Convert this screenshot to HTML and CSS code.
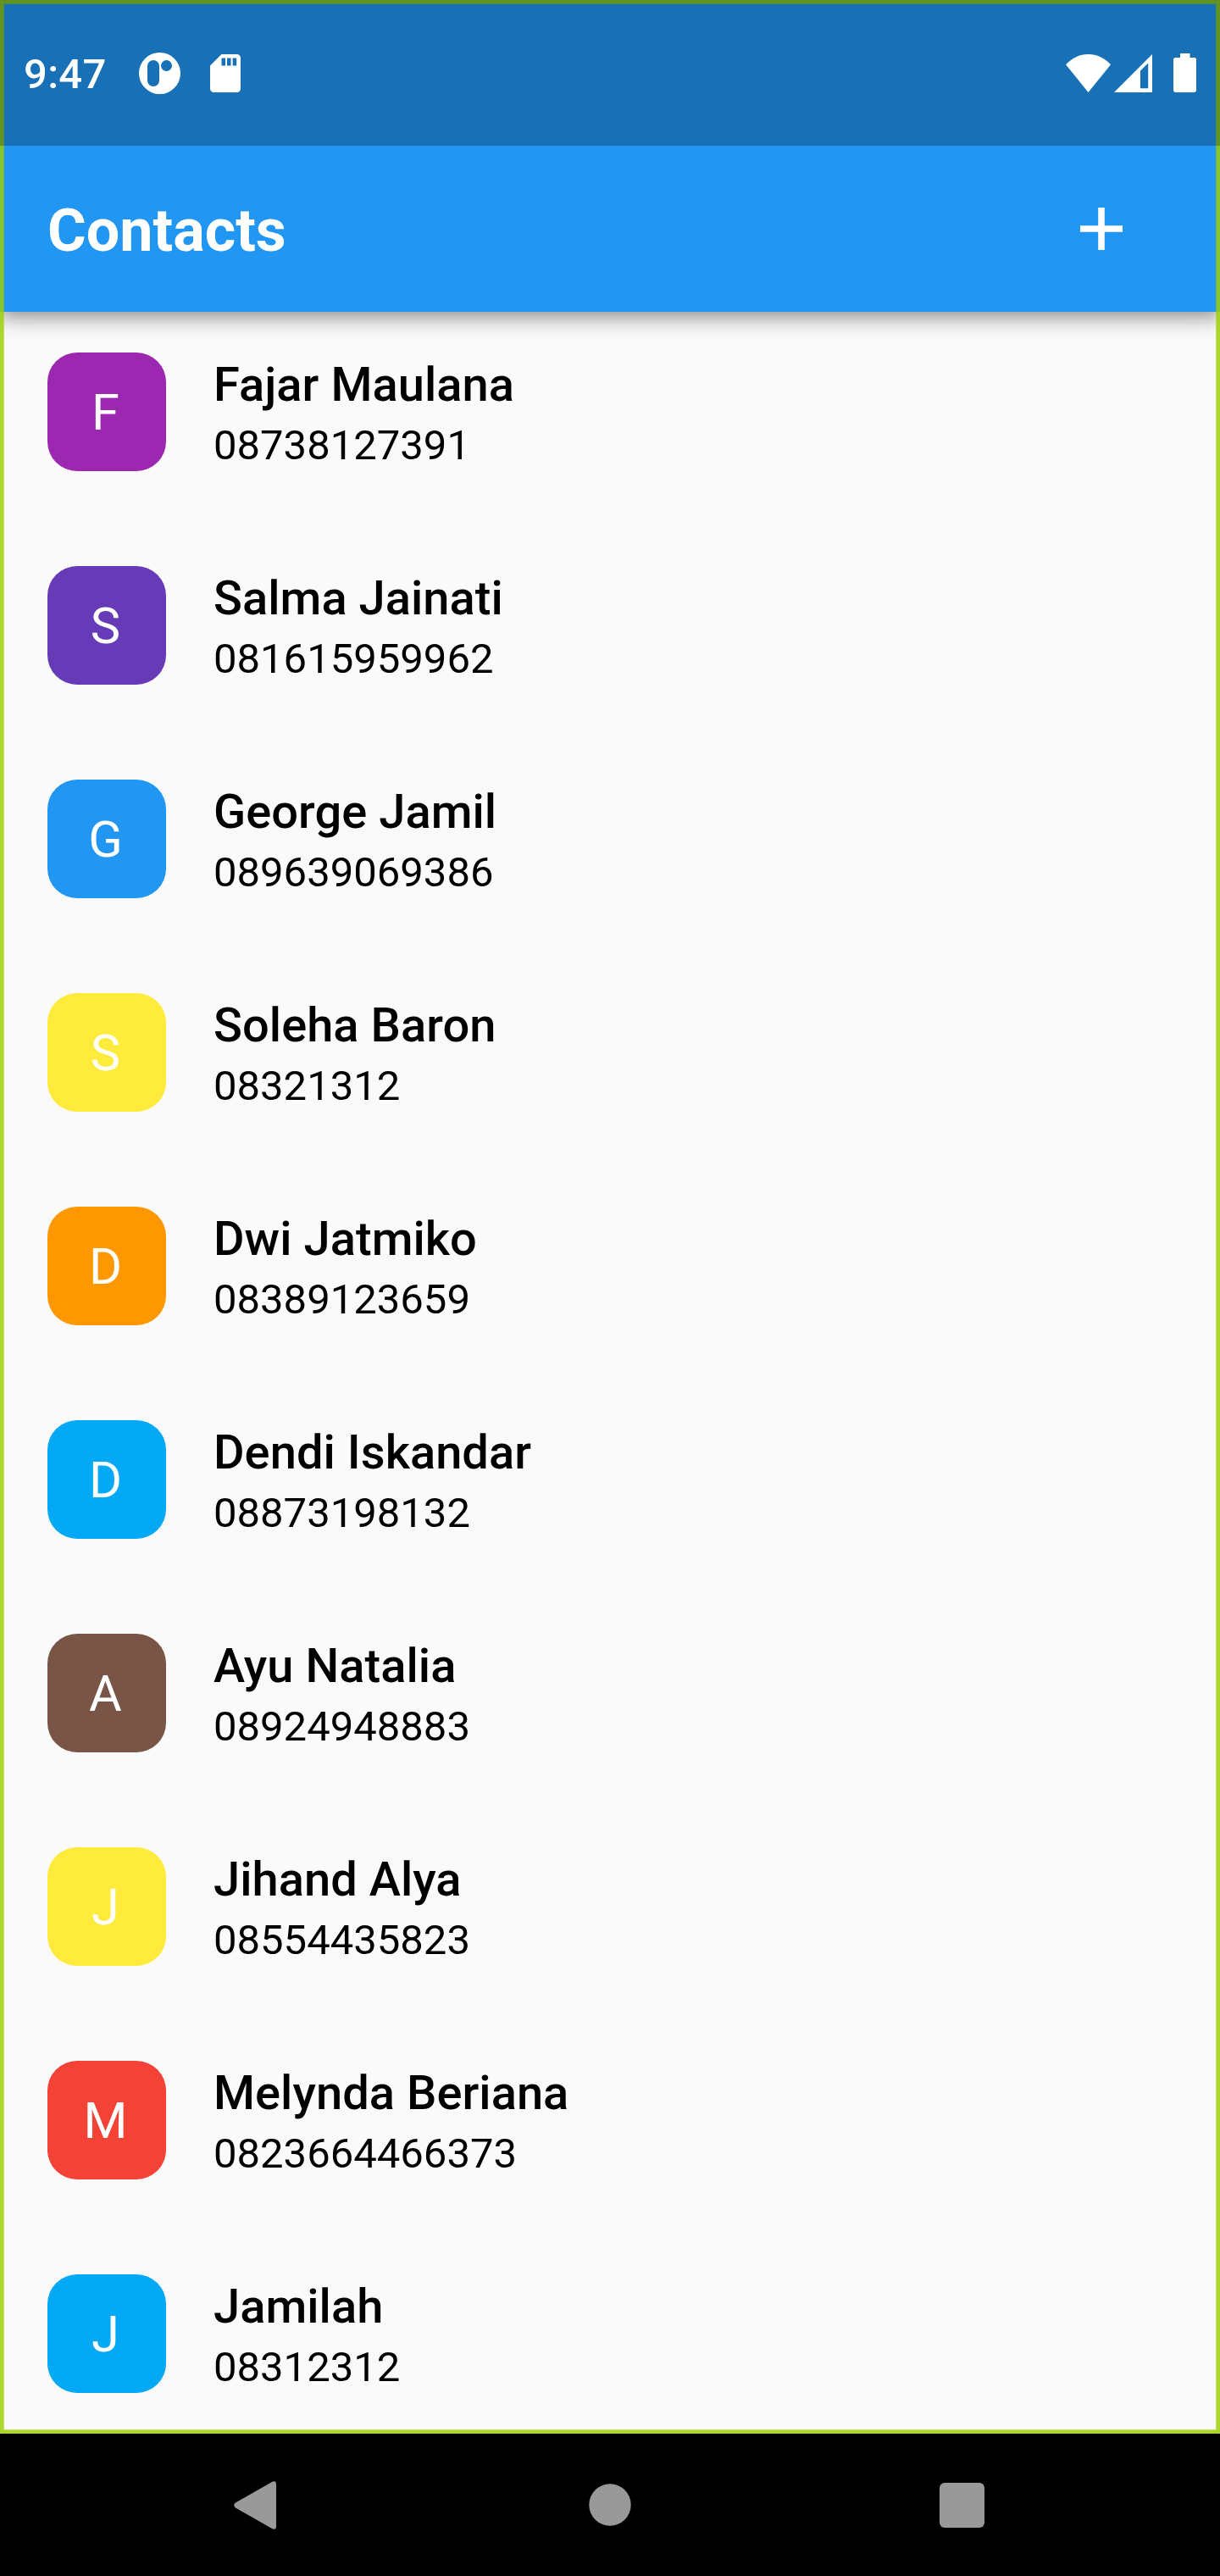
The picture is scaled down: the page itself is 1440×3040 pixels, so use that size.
FILE: index.html
```html
<!DOCTYPE html>
<html lang="en">
<head>
<meta charset="utf-8">
<title>Contacts</title>
<link rel="stylesheet" href="styles.css">
</head>
<body>
<div class="phone">
  <div class="screen">
    <header class="status-bar">
      <span class="clock">9:47</span>
      <svg class="app-icon" width="49" height="49" viewBox="0 0 49 49"><path fill="#fff" fill-rule="evenodd" d="M24.5 0a24.5 24.5 0 1 0 0 49a24.5 24.5 0 1 0 0-49zM17 9a7 7 0 0 1 7 7v17a7 7 0 0 1-14 0V16a7 7 0 0 1 7-7zM32.500 9a6.500 6.500 0 1 1 0 13a6.500 6.500 0 1 1 0-13z"/></svg>
      <svg class="sd-icon" width="36" height="45" viewBox="0 0 36 45"><path fill="#fff" fill-rule="evenodd" d="M13.500 0H31.500a4.500 4.500 0 0 1 4.500 4.500V40.500a4.500 4.500 0 0 1-4.500 4.500H4.500a4.500 4.500 0 0 1-4.500-4.500V13.500zM13.500 4.500v9h4.500v-9zM20 4.500v9h4.500v-9zM26.700 4.500v9h4.500v-9z"/></svg>
      <div class="signals">
        <svg width="53" height="45" viewBox="0 0 53 45"><path fill="#fff" d="M0 12.300C7 4.500 16.500 0 26.500 0S46 4.500 53 12.300L26.500 45z"/></svg>
        <svg class="cell" width="45" height="45" viewBox="0 0 45 45"><path fill="#fff" fill-rule="evenodd" d="M0 45L45 0V45zM31 19.500V40.300H40.200V10.500z"/></svg>
        <svg class="battery" width="27" height="46" viewBox="0 0 27 46"><path fill="#fff" d="M8 0H19.500V5H24.500Q27 5 27 7.500V43Q27 46 24 46H3Q0 46 0 43V7.500Q0 5 2.500 5H8z"/></svg>
      </div>
    </header>
    <div class="app-bar">
      <h1 class="title">Contacts</h1>
      <svg class="add" width="50" height="50" viewBox="0 0 50 50"><path fill="#fff" d="M21.200 0h7.600v21.200H50v7.600H28.800V50h-7.600V28.800H0v-7.600h21.200z"/></svg>
    </div>
    <main class="list">
      <div class="row"><div class="avatar purple">F</div><div class="info"><div class="name">Fajar Maulana</div><div class="number">08738127391</div></div></div>
      <div class="row"><div class="avatar deep-purple">S</div><div class="info"><div class="name">Salma Jainati</div><div class="number">081615959962</div></div></div>
      <div class="row"><div class="avatar blue">G</div><div class="info"><div class="name">George Jamil</div><div class="number">089639069386</div></div></div>
      <div class="row"><div class="avatar yellow">S</div><div class="info"><div class="name">Soleha Baron</div><div class="number">08321312</div></div></div>
      <div class="row"><div class="avatar orange">D</div><div class="info"><div class="name">Dwi Jatmiko</div><div class="number">08389123659</div></div></div>
      <div class="row"><div class="avatar light-blue">D</div><div class="info"><div class="name">Dendi Iskandar</div><div class="number">08873198132</div></div></div>
      <div class="row"><div class="avatar brown">A</div><div class="info"><div class="name">Ayu Natalia</div><div class="number">08924948883</div></div></div>
      <div class="row"><div class="avatar yellow">J</div><div class="info"><div class="name">Jihand Alya</div><div class="number">08554435823</div></div></div>
      <div class="row"><div class="avatar red">M</div><div class="info"><div class="name">Melynda Beriana</div><div class="number">0823664466373</div></div></div>
      <div class="row"><div class="avatar light-blue">J</div><div class="info"><div class="name">Jamilah</div><div class="number">08312312</div></div></div>
    </main>
    <div class="glow"></div>
  </div>
  <nav class="nav-bar">
    <svg width="50" height="57" viewBox="0 0 50 57"><path fill="#999" d="M2 25.500L45 1Q50-1.500 50 4V53Q50 58.500 45 56L2 31.500Q-1.500 28.500 2 25.500z"/></svg>
    <svg class="home" width="50" height="50" viewBox="0 0 50 50"><circle fill="#999" cx="25" cy="25" r="24.700"/></svg>
    <svg width="53" height="53" viewBox="0 0 53 53"><rect fill="#999" width="53" height="53" rx="6"/></svg>
  </nav>
</div>
</body>
</html>
```
FILE: styles.css
```css
* { box-sizing: border-box; }
body { margin: 0; font-family: Roboto, sans-serif; background: #000; }
.phone { width: 1440px; height: 3040px; display: flex; flex-direction: column; overflow: hidden; }
.screen { position: relative; height: 2872px; display: flex; flex-direction: column; overflow: hidden; background: linear-gradient(#2196f3 172px, #fafafa 172px); }
/* Translucent scrim: darkens the app bar colour and the edge glow beneath it */
.status-bar { position: relative; z-index: 3; flex: none; height: 172px; display: flex; align-items: center; padding: 0 28px; background: rgba(0,0,0,.25); color: #fff; }
.clock { font-size: 49px; font-weight: 500; line-height: 58px; letter-spacing: .3px; width: 98px; margin-top: 4px; }
.app-icon { margin-left: 38px; }
.sd-icon { margin-left: 35px; }
.signals { margin-left: auto; display: flex; align-items: center; }
.cell { margin-left: 4px; }
.battery { margin-left: 25px; }
.app-bar { flex: none; height: 196px; display: flex; align-items: center; justify-content: space-between; padding: 0 115px 0 56px; background: #2196f3; color: #fff; box-shadow: 0 7px 14px -3.500px rgba(0,0,0,.2), 0 14px 17.500px rgba(0,0,0,.14), 0 3.500px 35px rgba(0,0,0,.12); clip-path: inset(0 0 -60px 0); z-index: 1; }
.title { margin: 4px 0 0; font-size: 70px; font-weight: 700; line-height: 82px; }
.list { flex: 1; overflow: hidden; }
.row { height: 252px; padding: 48px 56px 0; display: flex; gap: 56px; }
.avatar { width: 140px; height: 140px; padding-right: 3px; border-radius: 35px; color: #fff; font-size: 59.500px; line-height: 142px; text-align: center; }
.info { padding-top: 5px; color: #000; }
.name { font-size: 56px; font-weight: 500; line-height: 66px; letter-spacing: .06px; }
.number { margin-top: 10px; font-size: 49px; line-height: 58px; }
.purple { background: #9c27b0; }
.deep-purple { background: #673ab7; }
.blue { background: #2196f3; }
.yellow { background: #ffeb3b; }
.orange { background: #ff9800; }
.light-blue { background: #03a9f4; }
.brown { background: #795548; }
.red { background: #f44336; }
.glow { position: absolute; inset: 0; z-index: 2; border: 4px solid rgba(154,206,0,.82); box-shadow: inset 0 0 1px 1px rgba(154,206,0,.6); pointer-events: none; }
.nav-bar { height: 168px; display: flex; align-items: center; justify-content: space-between; padding: 0 278px 0 276px; background: #000; }
.home { margin-left: 5px; }
```
